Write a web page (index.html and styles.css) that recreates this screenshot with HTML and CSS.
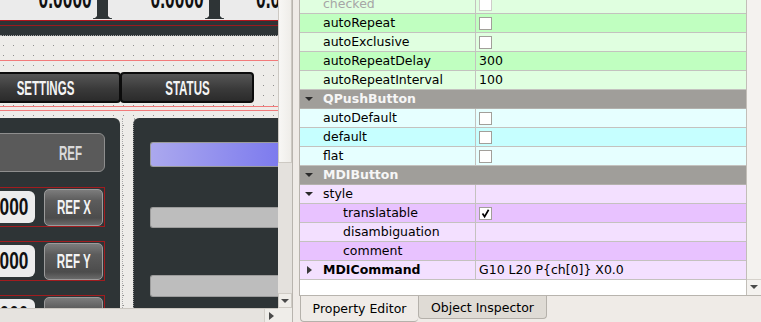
FILE: index.html
```html
<!DOCTYPE html>
<html lang="en">
  <head>
    <meta charset="UTF-8" />
    <title>Designer - Property Editor</title>
    <link rel="stylesheet" href="styles.css">
  </head>
  <body>
    <div class="designer">
      <div class="designer-main">
        <div class="canvas">
          <div class="dro-strip">
            <div class="dro-row">
              <div class="dro"><span class="cond">0.0000</span></div>
              <div class="dro-sep"><span class="flare-l"></span><span class="stem"></span><span class="flare-r"></span></div>
              <div class="dro"><span class="cond">0.0000</span></div>
              <div class="dro-sep"><span class="flare-l"></span><span class="stem"></span><span class="flare-r"></span></div>
              <div class="dro"><span class="cond">0.0000</span></div>
            </div>
            <div class="dro-gap"></div>
          </div>
          <div class="grid-a"></div>
          <div class="grid-b"></div>
          <div class="mode-bar">
            <div class="mode-btn settings"><span class="cond">SETTINGS</span></div>
            <div class="mode-btn status"><span class="cond">STATUS</span></div>
          </div>
          <div class="grid-c"><div class="red-pair"></div></div>
          <div class="panels">
            <div class="panel ref-panel">
              <div class="ref-btn"><span class="cond">REF</span></div>
              <div class="axis-row">
                <div class="axis-val"><span class="cond">0.0000</span></div>
                <div class="axis-btn"><span class="cond">REF X</span></div>
              </div>
              <div class="axis-row">
                <div class="axis-val"><span class="cond">0.0000</span></div>
                <div class="axis-btn"><span class="cond">REF Y</span></div>
              </div>
              <div class="axis-row">
                <div class="axis-val"><span class="cond">0.0000</span></div>
                <div class="axis-btn"><span class="cond">REF Z</span></div>
              </div>
            </div>
            <div class="panel-gap"></div>
            <div class="panel bar-panel">
              <div class="bar bar-rate"></div>
              <div class="bar bar-gray first"></div>
              <div class="bar bar-gray second"></div>
            </div>
          </div>
        </div>
        <div class="vscroll">
          <div class="vhandle"></div>
          <div class="vtrack"></div>
          <div class="sbtn"><span class="tri-down"></span></div>
        </div>
      </div>
      <div class="hscroll-row">
        <div class="hscroll">
          <div class="htrack"></div>
          <div class="sbtn"><span class="tri-right"></span></div>
        </div>
        <div class="corner"></div>
      </div>
    </div>

    <div class="splitter"></div>

    <div class="dock">
      <div class="prop-view">
        <div class="prop-rows">
          <div class="row green-a first-row">
            <div class="name dim">checked</div>
            <div class="value"><span class="check dimbox"></span></div>
          </div>
          <div class="row green-b">
            <div class="name">autoRepeat</div>
            <div class="value"><span class="check"></span></div>
          </div>
          <div class="row green-a">
            <div class="name">autoExclusive</div>
            <div class="value"><span class="check"></span></div>
          </div>
          <div class="row green-b">
            <div class="name">autoRepeatDelay</div>
            <div class="value">300</div>
          </div>
          <div class="row green-a">
            <div class="name">autoRepeatInterval</div>
            <div class="value">100</div>
          </div>
          <div class="row head">
            <div class="name"><span class="arrow"><span class="tri-open"></span></span>QPushButton</div>
          </div>
          <div class="row cyan-a">
            <div class="name">autoDefault</div>
            <div class="value"><span class="check"></span></div>
          </div>
          <div class="row cyan-b">
            <div class="name">default</div>
            <div class="value"><span class="check"></span></div>
          </div>
          <div class="row cyan-a">
            <div class="name">flat</div>
            <div class="value"><span class="check"></span></div>
          </div>
          <div class="row head">
            <div class="name"><span class="arrow"><span class="tri-open"></span></span>MDIButton</div>
          </div>
          <div class="row purple-a">
            <div class="name branch"><span class="arrow"><span class="tri-open"></span></span>style</div>
            <div class="value"></div>
          </div>
          <div class="row purple-b">
            <div class="name sub">translatable</div>
            <div class="value">
              <span class="check">
                <svg width="11" height="11" viewBox="0 0 11 11"><path d="M2.5 5.5 L4.6 8.6 L8.6 1.8" fill="none" stroke="#000" stroke-width="1.7"/></svg>
              </span>
            </div>
          </div>
          <div class="row purple-a">
            <div class="name sub">disambiguation</div>
            <div class="value"></div>
          </div>
          <div class="row purple-b">
            <div class="name sub">comment</div>
            <div class="value"></div>
          </div>
          <div class="row purple-a">
            <div class="name branch strong"><span class="arrow"><span class="tri-closed"></span></span>MDICommand</div>
            <div class="value">G10 L20 P{ch[0]} X0.0</div>
          </div>
        </div>
        <div class="prop-scroll">
          <div class="vtrack"></div>
          <div class="sbtn small"><span class="tri-down"></span></div>
        </div>
      </div>
      <div class="dock-tabs">
        <div class="dtab active">Property Editor</div>
        <div class="dtab">Object Inspector</div>
      </div>
    </div>
  </body>
</html>
```

FILE: styles.css
```css
* {
  box-sizing: border-box;
}
body {
  margin: 0;
  width: 761px;
  height: 322px;
  overflow: hidden;
  display: flex;
  background: #efebe7;
  font-family: "DejaVu Sans", "Noto Sans", sans-serif;
  font-size: 12.5px;
}

/* ---- designer form (left) ---- */
.designer {
  width: 292px;
  display: flex;
  flex-direction: column;
}
.designer-main {
  display: flex;
  height: 308px;
}
.canvas {
  width: 278px;
  overflow: hidden;
  display: flex;
  flex-direction: column;
  background-color: #eeece9;
  background-image: conic-gradient(at 1px 1px, transparent 75%, #8e8e8e 0);
  background-size: 10px 10px;
  background-position: 3px 5px;
}
.canvas > * {
  flex: none;
}
.cond {
  display: inline-block;
  font-family: "Liberation Sans", Arial, sans-serif;
  font-weight: bold;
  transform: scaleX(0.55);
  white-space: nowrap;
}

.dro-strip {
  height: 36px;
  background: #2e3436;
  border-bottom: 1px dotted #a5a5a5;
}
.dro-row {
  display: flex;
  height: 21px;
  background: #ebebeb;
  border-bottom: 1px solid #b2141b;
  overflow: hidden;
}
.dro {
  flex: none;
  width: 93px;
  display: flex;
  justify-content: flex-end;
  padding-right: 1px;
}
.dro:last-child {
  width: 120px;
  justify-content: flex-start;
  padding-left: 32px;
}
.dro .cond {
  font-size: 30px;
  line-height: 30px;
  height: 30px;
  margin-top: -17px;
  color: #111;
  transform-origin: right center;
  transform: scaleX(0.58);
}
.dro:last-child .cond {
  transform-origin: left center;
}
.dro-sep {
  flex: none;
  display: flex;
  align-items: flex-end;
  height: 19px;
}
.stem {
  width: 11px;
  height: 19px;
  background: #2e3436;
}
.flare-l,
.flare-r {
  width: 4px;
  height: 5px;
}
.flare-l {
  background: radial-gradient(circle at 0 0, transparent 4px, #2e3436 4.6px);
}
.flare-r {
  background: radial-gradient(circle at 100% 0, transparent 4px, #2e3436 4.6px);
}
.dro-gap {
  height: 5px;
  border-bottom: 1px solid #9a1a1e;
}

.grid-a {
  height: 25px;
  border-bottom: 1px solid #f27a7a;
}
.grid-b {
  height: 11px;
}

.mode-bar {
  display: flex;
  height: 31px;
}
.mode-btn {
  flex: none;
  border: 2px solid #0c0c0c;
  border-radius: 4px;
  background: linear-gradient(#565656, #3a3a3a 55%, #2b2b2b);
  color: #f4f4f4;
  display: flex;
  align-items: center;
  justify-content: center;
  font-size: 21px;
}
.settings {
  width: 150px;
  margin-left: -29px;
}
.status {
  width: 134px;
  margin-left: -1px;
}

.grid-c {
  height: 15px;
  padding-top: 3px;
}
.red-pair {
  height: 5px;
  border-top: 1px solid #f27a7a;
  border-bottom: 1px solid #f27a7a;
}

.panels {
  flex: 1 1 auto;
  min-height: 0;
  display: flex;
}
.panel {
  background: #2e3436;
  display: flex;
  flex-direction: column;
}
.ref-panel {
  flex: none;
  width: 120px;
  border-radius: 0 6px 0 0;
  padding-top: 15px;
}
.ref-panel > * {
  flex: none;
}
.ref-btn {
  width: 115px;
  height: 39px;
  margin-left: -10px;
  background: #5a5a5a;
  border: 1px solid #8e8e8e;
  border-radius: 6px;
  color: #d9d9d9;
  font-size: 21px;
  display: flex;
  align-items: center;
  justify-content: flex-end;
  padding-right: 22px;
}
.ref-btn .cond {
  transform-origin: right center;
}
.axis-row {
  width: 115px;
  height: 40px;
  margin-left: -10px;
  margin-top: 15px;
  border: 1px solid #a11c1f;
  display: flex;
  align-items: center;
  padding-right: 1px;
}
.axis-row + .axis-row {
  margin-top: 14px;
}
.axis-val {
  flex: none;
  width: 44px;
  height: 32px;
  margin-right: 9px;
  background: #ececec;
  border-radius: 6px;
  overflow: hidden;
  display: flex;
  justify-content: flex-end;
  align-items: center;
  padding-right: 7px;
  font-size: 24px;
  color: #111;
}
.axis-val .cond {
  transform-origin: right center;
  transform: scaleX(0.72);
}
.axis-btn {
  flex: none;
  width: 59px;
  height: 37px;
  border: 1px solid #9b9b9b;
  border-radius: 5px;
  background: linear-gradient(#7c7c7c, #5c5c5c 30%, #4c4c4c 80%, #6a6a6a);
  color: #f4f4f4;
  font-size: 21px;
  display: flex;
  align-items: center;
  justify-content: center;
}
.panel-gap {
  flex: none;
  width: 13px;
  border-left: 1px dotted #a8a8a8;
  border-right: 1px dotted #a8a8a8;
  margin-left: 2px;
}
.bar-panel {
  flex: 1;
  min-width: 0;
  overflow: hidden;
  border-radius: 6px 0 0 0;
  border-left: 1px dotted #9a9a9a;
  padding-top: 24px;
  margin-left: -2px;
}
.bar {
  flex: none;
  width: 160px;
  margin-left: 16px;
  border: 1px solid #9c9c9c;
  border-right: none;
  border-radius: 3px 0 0 3px;
}
.bar-rate {
  height: 25px;
  background: linear-gradient(to right, #aba8ee, #8e8cee 50%, #7270ee);
}
.bar-gray {
  background: #bdbdbd;
}
.bar-gray.first {
  height: 21px;
  margin-top: 40px;
}
.bar-gray.second {
  height: 22px;
  margin-top: 47px;
}

/* ---- scrollbars ---- */
.vscroll {
  width: 14px;
  display: flex;
  flex-direction: column;
  background: #e4e1dd;
}
.vhandle {
  height: 163px;
  background: linear-gradient(to right, #f8f7f5, #efede9);
  border: 1px solid #cdc9c3;
  border-top: none;
}
.vtrack {
  flex: 1;
}
.sbtn {
  height: 15px;
  display: flex;
  align-items: center;
  justify-content: center;
  background: #efede9;
  border: 1px solid #cfcbc5;
}
.hscroll-row {
  height: 14px;
  display: flex;
}
.hscroll {
  width: 278px;
  display: flex;
  background: #e6e3df;
  border-top: 1px solid #cbc7c1;
}
.htrack {
  flex: 1;
}
.hscroll .sbtn {
  width: 14px;
  height: auto;
  border: none;
  border-left: 1px solid #d3cfc9;
}
.corner {
  flex: 1;
  background: #efede9;
}
.tri-down {
  width: 0;
  height: 0;
  border-left: 4px solid transparent;
  border-right: 4px solid transparent;
  border-top: 4px solid #4a4a4a;
}
.tri-right {
  width: 0;
  height: 0;
  border-top: 4px solid transparent;
  border-bottom: 4px solid transparent;
  border-left: 5px solid #4a4a4a;
}

.splitter {
  width: 7px;
  border-left: 1px solid #b8b4ae;
  background: #efebe7;
}

/* ---- property editor (right) ---- */
.dock {
  flex: 1;
  display: flex;
  flex-direction: column;
}
.prop-view {
  height: 296px;
  display: flex;
  border-left: 1px solid #b8b4ae;
  border-bottom: 1px solid #b8b4ae;
  background: #fff;
}
.prop-rows {
  flex: 1;
  overflow: hidden;
}
.row {
  display: flex;
  height: 19px;
  line-height: 18px;
  border-bottom: 1px solid #c4c2bf;
  color: #000;
}
.first-row {
  margin-top: -5px;
}
.name {
  width: 176px;
  flex: none;
  padding-left: 23px;
  border-right: 1px solid #c4c2bf;
  display: flex;
  align-items: center;
  white-space: nowrap;
}
.name.dim {
  color: #a6a6a6;
}
.name.sub {
  padding-left: 43px;
}
.name.branch,
.head .name {
  padding-left: 5px;
}
.name.strong {
  font-weight: bold;
}
.value {
  flex: 1;
  padding-left: 3px;
  display: flex;
  align-items: center;
  white-space: nowrap;
}
.arrow {
  width: 18px;
  display: flex;
  align-items: center;
}
.tri-open {
  width: 0;
  height: 0;
  border-left: 4px solid transparent;
  border-right: 4px solid transparent;
  border-top: 4px solid #2a2a2a;
}
.tri-closed {
  width: 0;
  height: 0;
  margin-left: 2px;
  border-top: 4px solid transparent;
  border-bottom: 4px solid transparent;
  border-left: 5px solid #3a3a3a;
}
.head {
  background: #a09e9a;
  color: #f6f6f6;
  font-weight: bold;
  border-bottom-color: #b3b1ad;
}
.head .name {
  width: auto;
  border-right: none;
}
.check {
  width: 13px;
  height: 13px;
  background: #fff;
  border: 1px solid #a29f9a;
  display: flex;
  align-items: center;
  justify-content: center;
}
.check.dimbox {
  border-color: #cfcdca;
}
.green-a { background: #e0ffe0; }
.green-b { background: #c0ffc0; }
.cyan-a { background: #e6ffff; }
.cyan-b { background: #c6ffff; }
.purple-a { background: #f3e0ff; }
.purple-b { background: #e8c2ff; }

.prop-scroll {
  width: 15px;
  display: flex;
  flex-direction: column;
  background: #f4f2ef;
  border-left: 1px solid #c2beb8;
}
.prop-scroll .sbtn {
  height: 14px;
  border: none;
  border-top: 1px solid #d6d2cc;
  background: #f4f2ef;
  margin-bottom: 2px;
}

.dock-tabs {
  flex: 1;
  display: flex;
  padding-left: 1px;
}
.dtab {
  height: 23px;
  padding: 0 12px;
  display: flex;
  align-items: center;
  background: #dfdbd5;
  border: 1px solid #b5b1ab;
  border-top: none;
  border-radius: 0 0 4px 4px;
  color: #000;
  white-space: nowrap;
}
.dtab.active {
  height: 26px;
  width: 118px;
  justify-content: center;
  background: #efebe7;
  border-right: none;
}
```
